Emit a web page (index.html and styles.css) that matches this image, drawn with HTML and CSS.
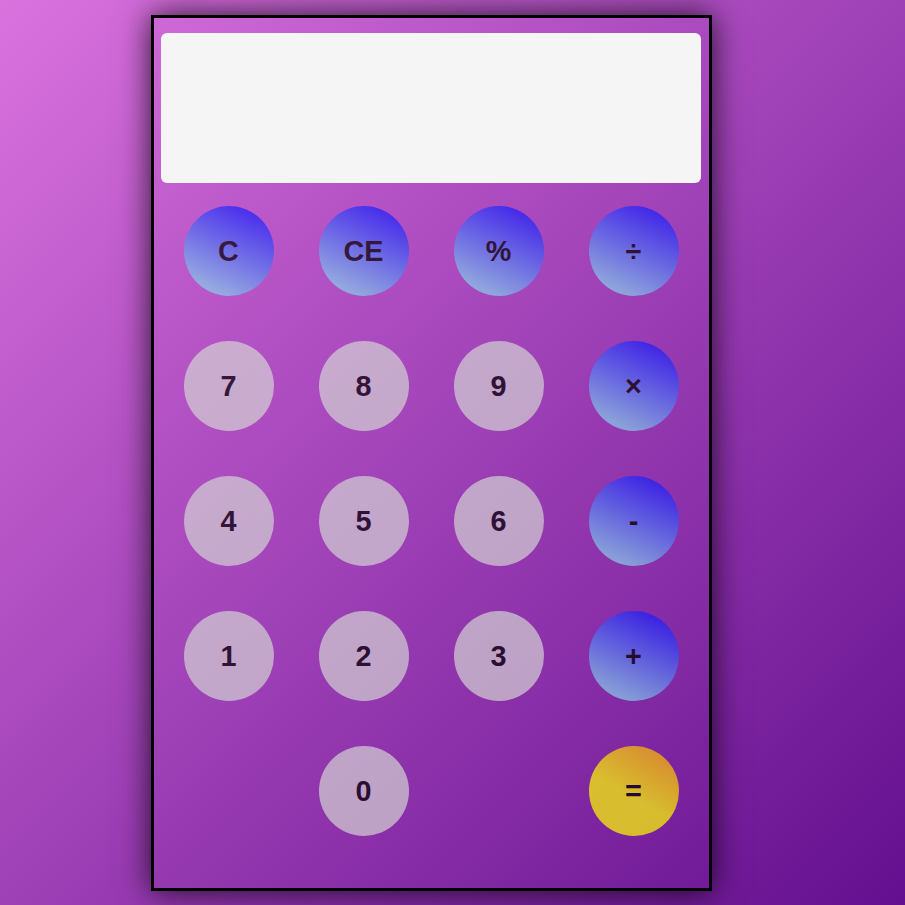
FILE: index.html
```html
<!DOCTYPE html>
<html lang="en">
<head>
<meta charset="utf-8">
<title>Calculator</title>
<link rel="stylesheet" href="styles.css">
</head>
<body>
  <div class="calculator">
    <div class="display"></div>
    <div class="keys">
      <button class="key op">C</button>
      <button class="key op">CE</button>
      <button class="key op">%</button>
      <button class="key op">÷</button>

      <button class="key num">7</button>
      <button class="key num">8</button>
      <button class="key num">9</button>
      <button class="key op">×</button>

      <button class="key num">4</button>
      <button class="key num">5</button>
      <button class="key num">6</button>
      <button class="key op">-</button>

      <button class="key num">1</button>
      <button class="key num">2</button>
      <button class="key num">3</button>
      <button class="key op">+</button>

      <span class="blank"></span>
      <button class="key num">0</button>
      <span class="blank"></span>
      <button class="key eq">=</button>
    </div>
  </div>
</body>
</html>
```

FILE: styles.css
```css
html {
  height: 100%;
}

body {
  margin: 0;
  min-height: 100%;
  background: linear-gradient(135deg, #da72de 0%, #630f8f 100%);
  font-family: "Liberation Sans", Arial, sans-serif;
  padding: 15px 0 0 151px;
  box-sizing: border-box;
}

.calculator {
  box-sizing: border-box;
  width: 561px;
  height: 876px;
  border: 3px solid #000;
  box-shadow: 0 0 30px rgba(0, 0, 0, 0.8);
  padding: 15px 8px 30px 7px;
  display: flex;
  flex-direction: column;
}

.display {
  width: 540px;
  height: 150px;
  background: #f5f5f5;
  border-radius: 6px;
  flex: none;
}

.keys {
  display: grid;
  grid-template-columns: repeat(4, 135px);
  grid-template-rows: repeat(5, 135px);
  place-items: center;
}

.key {
  width: 90px;
  height: 90px;
  border: none;
  border-radius: 50%;
  padding: 2px 0 0;
  margin: 0;
  font-family: "Liberation Sans", Arial, sans-serif;
  font-weight: bold;
  font-size: 28.8px;
  color: #000;
  opacity: 0.7;
  display: flex;
  align-items: center;
  justify-content: center;
}

.num {
  background: #d3d3d3;
}

.op {
  background: linear-gradient(205deg, #0a00ff 0%, #87ceeb 85%);
}

.eq {
  background: linear-gradient(210deg, #ffa500 0%, #ffff00 55%);
}
```
